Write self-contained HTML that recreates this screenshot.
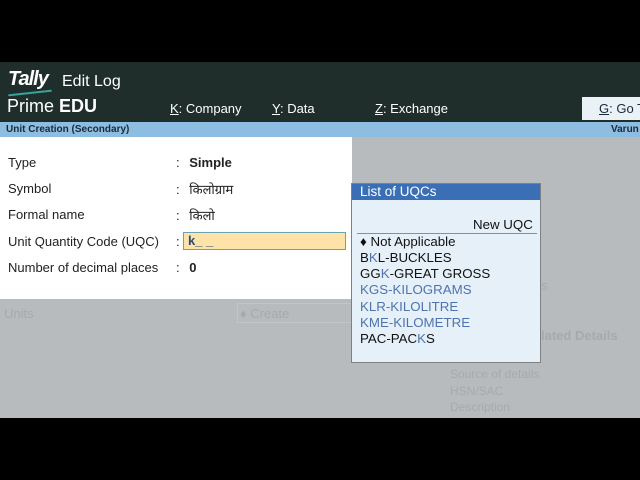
<!DOCTYPE html>
<html><head><meta charset="utf-8"><style>
*{margin:0;padding:0;box-sizing:border-box}
body{width:640px;height:480px;background:#000;position:relative;overflow:hidden;font-family:"Liberation Sans",sans-serif}
.a{position:absolute;white-space:nowrap}
.hdr{left:0;top:62px;width:640px;height:60px;background:#1f2e2b}
.bar{left:0;top:122px;width:640px;height:15px;background:#8dbde0;font-size:10px;font-weight:bold;color:#1a2a3a}
.gray{left:0;top:137px;width:640px;height:281px;background:#b7bbbe}
.panel{left:0;top:137px;width:352px;height:162px;background:#fff}
.lbl{font-size:13px;color:#222}
.g{color:#a6aaad;font-size:13px}
.pop{left:351px;top:183px;width:190px;height:180px;background:#e6f0f9;border:1px solid #7d8184}
.pt{position:absolute;left:0;top:0;width:188px;height:16px;background:#3b6fb5;color:#fff;font-size:13.5px;padding-left:8px;line-height:16px}
.it{position:absolute;left:8px;font-size:13.3px;color:#111}
.b{color:#4f74ad}
</style></head><body>
<div class="a hdr"></div>
<div class="a" style="left:8px;top:68px;color:#fff;font:italic bold 20px 'Liberation Sans',sans-serif;letter-spacing:-1px">Tally</div>
<div class="a" style="left:8px;top:92px;width:44px;height:2px;background:#3aa0a0;border-radius:2px;transform:rotate(-6deg)"></div>
<div class="a" style="left:62px;top:73px;color:#fff;font-size:16px">Edit Log</div>
<div class="a" style="left:7px;top:96px;color:#fff;font-size:18px">Prime <b>EDU</b></div>
<div class="a" style="left:170px;top:101px;color:#fff;font-size:13px"><u>K</u>: Company</div>
<div class="a" style="left:272px;top:101px;color:#fff;font-size:13px"><u>Y</u>: Data</div>
<div class="a" style="left:375px;top:101px;color:#fff;font-size:13px"><u>Z</u>: Exchange</div>
<div class="a" style="left:582px;top:97px;width:58px;height:23px;background:#eaf2f8;color:#1a2a3a;font-size:13px;padding:4px 0 0 17px"><u>G</u>: Go T</div>
<div class="a bar"><span style="position:absolute;left:6px;top:2px">Unit Creation (Secondary)</span><span style="position:absolute;left:611px;top:2px">Varun</span></div>
<div class="a gray"></div>
<div class="a g" style="left:4px;top:306px">Units</div>
<div class="a" style="left:237px;top:303px;width:115px;height:20px;border:1px solid #c2c6c9"></div>
<div class="a g" style="left:240px;top:306px">♦ Create</div>
<div class="a g" style="left:541px;top:278px">s</div>
<div class="a g" style="left:541px;top:328px;font-weight:bold">lated Details</div>
<div class="a g" style="left:450px;top:367px;font-size:12px">Source of details</div>
<div class="a g" style="left:450px;top:384px;font-size:12px">HSN/SAC</div>
<div class="a g" style="left:450px;top:400px;font-size:12px">Description</div>
<div class="a panel"></div>
<div class="a lbl" style="left:8px;top:155px">Type</div>
<div class="a lbl" style="left:8px;top:181px">Symbol</div>
<div class="a lbl" style="left:8px;top:207px">Formal name</div>
<div class="a lbl" style="left:8px;top:234px">Unit Quantity Code (UQC)</div>
<div class="a lbl" style="left:8px;top:260px">Number of decimal places</div>
<div class="a lbl" style="left:176px;top:155px">: <b style="margin-left:6px">Simple</b></div>
<div class="a lbl" style="left:176px;top:180px">: <span style="margin-left:6px">किलोग्राम</span></div>
<div class="a lbl" style="left:176px;top:206px">: <span style="margin-left:6px">किलो</span></div>
<div class="a lbl" style="left:176px;top:234px">:</div>
<div class="a" style="left:183px;top:232px;width:163px;height:18px;background:#fde3a8;border:1px solid #6aa3b0;font-size:13px;font-weight:bold;color:#2d4b7a;padding-left:4px">k_ _</div>
<div class="a lbl" style="left:176px;top:260px">: <b style="margin-left:6px">0</b></div>
<div class="a pop">
<div class="pt">List of UQCs</div>
<div class="it" style="left:121px;top:33px">New UQC</div>
<div style="position:absolute;left:5px;top:49px;width:180px;height:1px;background:#8a8f94"></div>
<div class="it" style="top:50px">♦ Not Applicable</div>
<div class="it" style="top:66px">B<span class="b">K</span>L-BUCKLES</div>
<div class="it" style="top:82px">GG<span class="b">K</span>-GREAT GROSS</div>
<div class="it b" style="top:98px">KGS-KILOGRAMS</div>
<div class="it b" style="top:115px">KLR-KILOLITRE</div>
<div class="it b" style="top:131px">KME-KILOMETRE</div>
<div class="it" style="top:147px">PAC-PAC<span class="b">K</span>S</div>
</div>
</body></html>
